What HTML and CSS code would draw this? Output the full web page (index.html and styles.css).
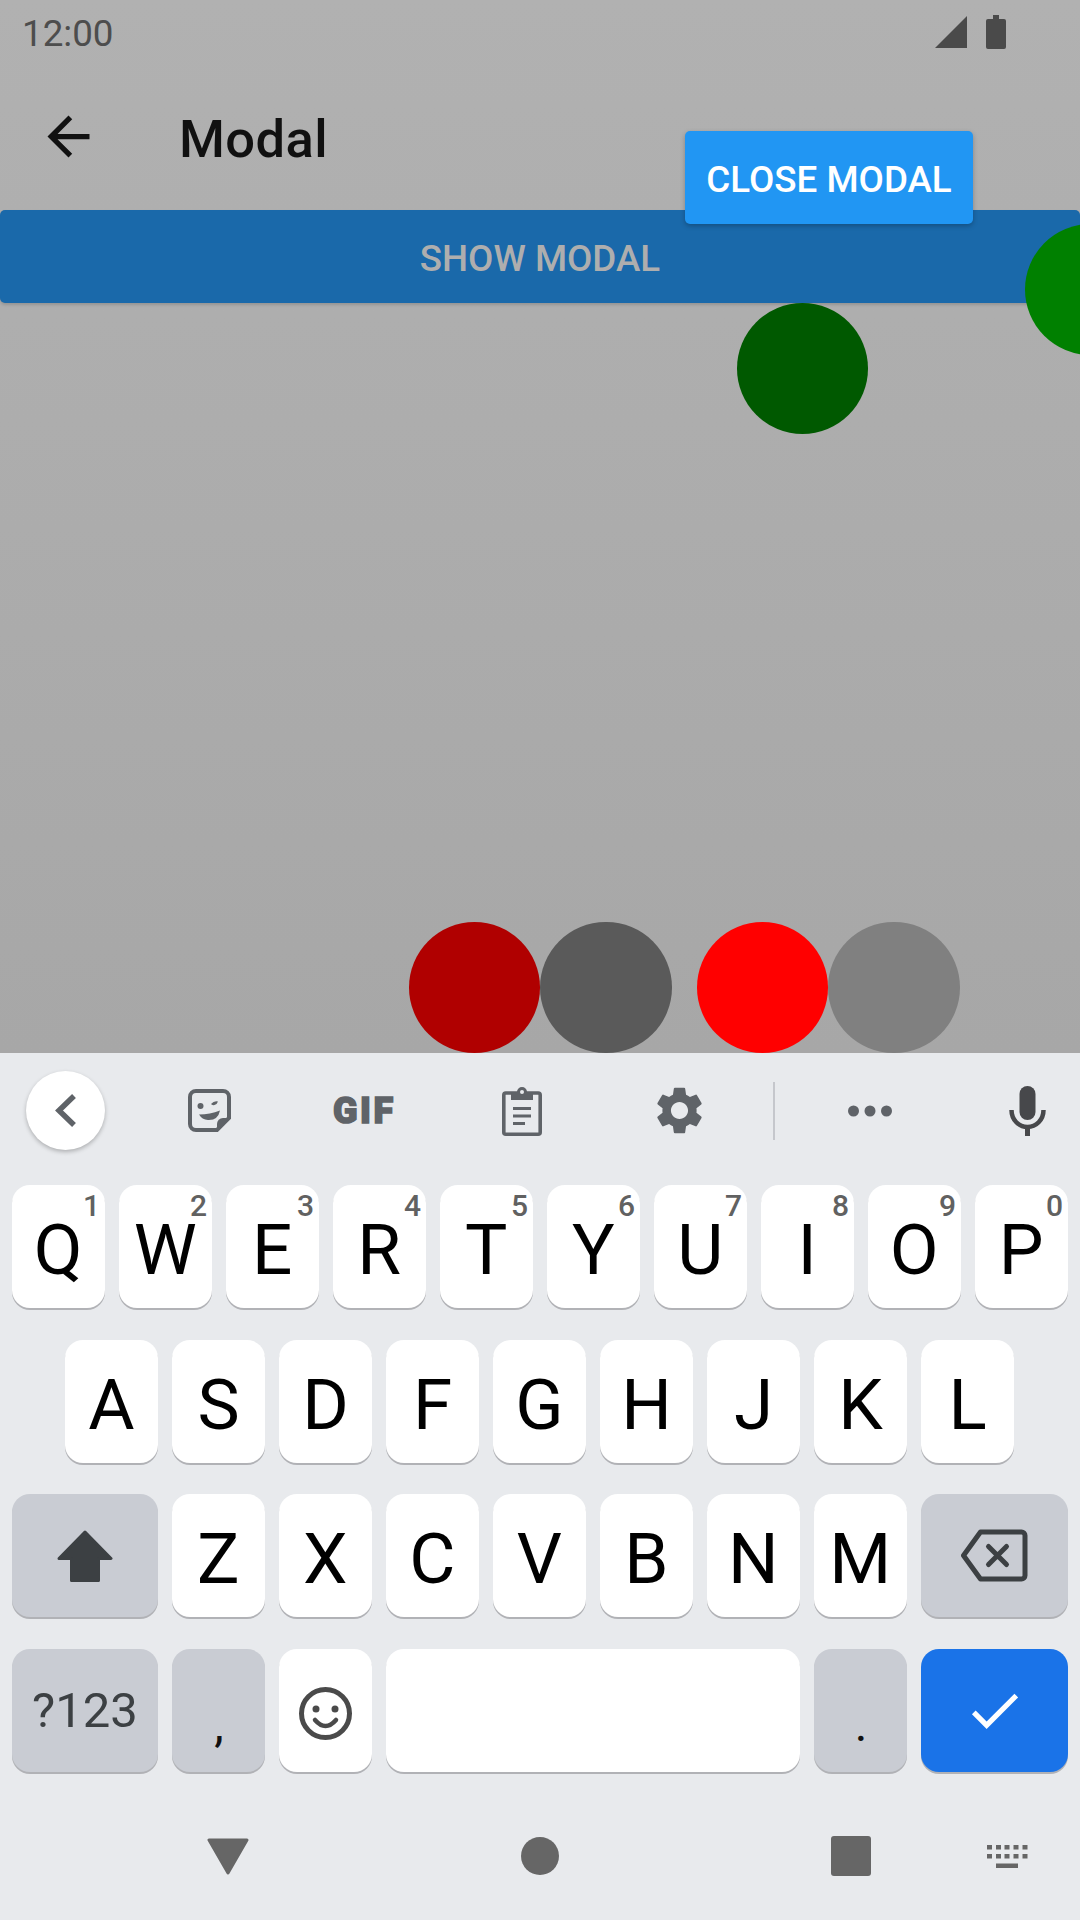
FILE: index.html
```html
<!DOCTYPE html>
<html lang="en">
<head>
    <meta charset="UTF-8">
    <title>Modal</title>
    <link rel="stylesheet" href="styles.css">
</head>
<body>
<div class="screen">
    <div class="main">
        <div class="status-bar">
            <span class="time">12:00</span>
            <div class="status-icons">
                <svg class="signal" width="32" height="32" viewBox="0 0 32 32"><path d="M0 32 32 0v32z"/></svg>
                <svg class="battery" width="20" height="34" viewBox="0 0 20 34"><path d="M7 0h6v4h5a2 2 0 0 1 2 2v26a2 2 0 0 1-2 2H2a2 2 0 0 1-2-2V6a2 2 0 0 1 2-2h5z"/></svg>
            </div>
        </div>
        <div class="app-bar">
            <svg class="back-arrow" width="63" height="63" viewBox="0 0 24 24"><path d="M20 11H7.83l5.59-5.59L12 4l-8 8 8 8 1.41-1.41L7.83 13H20v-2z"/></svg>
            <h1 class="title">Modal</h1>
        </div>
        <button class="btn show-btn">SHOW MODAL</button>
        <button class="btn close-btn">CLOSE MODAL</button>
        <div class="dot dot-green"></div>
        <div class="dot dot-green-dark"></div>
        <div class="dot-row">
            <div class="dot-item dot-red-dark"></div>
            <div class="dot-item dot-grey-dark"></div>
            <div class="dot-item dot-red"></div>
            <div class="dot-item dot-grey"></div>
        </div>
    </div>

    <div class="keyboard">
        <div class="toolbar">
            <div class="tool-back">
                <svg width="24" height="35" viewBox="0 0 24 35"><path d="M20 3 5 17.5 20 32" fill="none" stroke="#5f6368" stroke-width="5.5"/></svg>
            </div>
            <svg class="tool-sticker" width="43" height="43" viewBox="0 0 43 43">
                <path d="M8 2h27a6 6 0 0 1 6 6v21L29 41H8a6 6 0 0 1-6-6V8a6 6 0 0 1 6-6z" fill="none" stroke="#5f6368" stroke-width="4"/>
                <path d="M41 29 29 41v-6a6 6 0 0 1 6-6z" fill="#5f6368"/>
                <circle cx="12.500" cy="17" r="3" fill="#5f6368"/>
                <path d="M23 15q3-3.500 7-2.500-1 3-3.500 3.500t-3.500-1z" fill="#5f6368"/>
                <path d="M11 25.500q11 0 21-4-2 10-12 9.500-6-.5-9-5.500z" fill="#5f6368"/>
            </svg>
            <span class="tool-gif">GIF</span>
            <svg class="tool-clip" width="40" height="50" viewBox="0 0 40 50">
                <rect x="1.800" y="7" width="36.400" height="41.200" rx="2" fill="none" stroke="#5f6368" stroke-width="3.600"/>
                <path d="M9 6h6a5 5 0 0 1 10 0h6v8H9z" fill="#5f6368"/>
                <circle cx="20" cy="6" r="2" fill="#e8eaed"/>
                <path d="M11 21h18v3H11zM11 28.500h18v3H11zM11 36h12v3H11z" fill="#5f6368"/>
            </svg>
            <svg class="tool-gear" width="57" height="57" viewBox="0 0 24 24"><path d="M19.140 12.940c.04-.3.06-.61.06-.94 0-.32-.02-.64-.07-.94l2.030-1.580a.49.49 0 0 0 .12-.61l-1.920-3.320a.488.488 0 0 0-.59-.22l-2.390.96c-.5-.38-1.030-.7-1.620-.94l-.36-2.540a.484.484 0 0 0-.48-.41h-3.840c-.24 0-.43.17-.47.41l-.36 2.540c-.59.24-1.130.57-1.620.94l-2.390-.96c-.22-.08-.47 0-.59.22L2.740 8.870c-.12.21-.08.47.12.61l2.030 1.580c-.05.3-.09.63-.09.94s.02.64.07.94l-2.030 1.580a.49.49 0 0 0-.12.61l1.920 3.320c.12.22.37.29.59.22l2.390-.96c.5.38 1.030.7 1.620.94l.36 2.540c.05.24.24.41.48.41h3.840c.24 0 .44-.17.47-.41l.36-2.540c.59-.24 1.130-.56 1.620-.94l2.390.96c.22.08.47 0 .59-.22l1.920-3.320c.12-.22.07-.47-.12-.61l-2.010-1.580zM12 15.600c-1.980 0-3.600-1.620-3.600-3.600s1.620-3.600 3.600-3.600 3.600 1.620 3.600 3.600-1.620 3.600-3.600 3.600z"/></svg>
            <div class="tool-divider"></div>
            <svg class="tool-dots" width="44" height="12" viewBox="0 0 44 12">
                <circle cx="5.500" cy="6" r="5.500"/><circle cx="22" cy="6" r="5.500"/><circle cx="38.500" cy="6" r="5.500"/>
            </svg>
            <svg class="tool-mic" width="37" height="50" viewBox="0 0 37 50">
                <rect x="10.500" y="0" width="16" height="34" rx="8" fill="#47484b"/>
                <path d="M2.500 24c0 10 7.500 17 16 17s16-7 16-17" fill="none" stroke="#47484b" stroke-width="4.500"/>
                <rect x="16" y="40" width="5" height="10" fill="#47484b"/>
            </svg>
        </div>

        <div class="keys">
            <div class="key-row">
                <div class="key">Q<span class="hint">1</span></div>
                <div class="key">W<span class="hint">2</span></div>
                <div class="key">E<span class="hint">3</span></div>
                <div class="key">R<span class="hint">4</span></div>
                <div class="key">T<span class="hint">5</span></div>
                <div class="key">Y<span class="hint">6</span></div>
                <div class="key">U<span class="hint">7</span></div>
                <div class="key">I<span class="hint">8</span></div>
                <div class="key">O<span class="hint">9</span></div>
                <div class="key">P<span class="hint">0</span></div>
            </div>
            <div class="key-row key-row-center">
                <div class="key">A</div>
                <div class="key">S</div>
                <div class="key">D</div>
                <div class="key">F</div>
                <div class="key">G</div>
                <div class="key">H</div>
                <div class="key">J</div>
                <div class="key">K</div>
                <div class="key">L</div>
            </div>
            <div class="key-row">
                <div class="key key-shift key-grey">
                    <svg width="56" height="52" viewBox="0 0 56 52"><path d="M28 2 54 28.500H41.500V50.500H14.500V28.500H2z" fill="#3c4043" stroke="#3c4043" stroke-width="3" stroke-linejoin="round"/></svg>
                </div>
                <div class="key">Z</div>
                <div class="key">X</div>
                <div class="key">C</div>
                <div class="key">V</div>
                <div class="key">B</div>
                <div class="key">N</div>
                <div class="key">M</div>
                <div class="key key-last key-grey">
                    <svg width="67" height="53" viewBox="0 0 67 53">
                        <path d="M19.500 3h41a3.500 3.500 0 0 1 3.500 3.500v40a3.500 3.500 0 0 1-3.500 3.500h-41L2.500 26.500z" fill="none" stroke="#3c4043" stroke-width="5" stroke-linejoin="round"/>
                        <path d="M27.500 17.500l18 18M45.500 17.500l-18 18" fill="none" stroke="#3c4043" stroke-width="5" stroke-linecap="round"/>
                    </svg>
                </div>
            </div>
            <div class="key-row">
                <div class="key key-shift key-grey key-symbols">?123</div>
                <div class="key key-grey key-punct">,</div>
                <div class="key">
                    <svg width="53" height="53" viewBox="0 0 53 53">
                        <circle cx="26.500" cy="26.500" r="24" fill="none" stroke="#4a4a4a" stroke-width="5"/>
                        <circle cx="17" cy="22" r="3.500" fill="#4a4a4a"/>
                        <circle cx="36" cy="22" r="3.500" fill="#4a4a4a"/>
                        <path d="M16 33q10.500 12 21 0" fill="none" stroke="#4a4a4a" stroke-width="4.500" stroke-linecap="round"/>
                    </svg>
                </div>
                <div class="key key-space"></div>
                <div class="key key-grey key-punct">.</div>
                <div class="key key-last key-enter">
                    <svg width="63" height="63" viewBox="0 0 24 24"><path d="M9 16.170 4.830 12l-1.420 1.410L9 19 21 7l-1.410-1.410z" fill="#fff"/></svg>
                </div>
            </div>
        </div>

        <div class="nav-bar">
            <svg class="nav-back" width="42" height="37" viewBox="0 0 42 37"><path d="M2 2h38L21 35z" stroke="#666" stroke-width="3" stroke-linejoin="round"/></svg>
            <div class="nav-home"></div>
            <div class="nav-recent"></div>
            <svg class="nav-kb" width="41" height="23" viewBox="0 0 41 23">
                <path d="M0 0h5v4.500H0zM9 0h5v4.500H9zM17.500 0h5v4.500h-5zM26.500 0h5v4.500h-5zM35.500 0h5v4.500h-5zM0 9h5v4.500H0zM9 9h5v4.500H9zM17.500 9h5v4.500h-5zM26.500 9h5v4.500h-5zM35.500 9h5v4.500h-5zM9 18.500h22V23H9z"/>
            </svg>
        </div>
    </div>
</div>
</body>
</html>
```

FILE: styles.css
```css
* {
    box-sizing: border-box;
}
body {
    margin: 0;
    font-family: Roboto, "Liberation Sans", sans-serif;
}
.screen {
    width: 1080px;
    height: 1920px;
    display: flex;
    flex-direction: column;
    overflow: hidden;
}

/* dimmed app behind the modal */
.main {
    position: relative;
    height: 1053px;
    background: linear-gradient(#b1b1b1, #a7a7a7);
    overflow: hidden;
}
.status-bar {
    height: 63px;
    padding: 0 74px 0 22px;
    display: flex;
    align-items: center;
    justify-content: space-between;
}
.time {
    padding-top: 4px;
    font-size: 36.75px;
    color: #4d4d4d;
}
.status-icons {
    display: flex;
    align-items: center;
    gap: 19.500px;
}
.status-icons svg {
    display: block;
    fill: #4a4a4a;
}
.app-bar {
    height: 147px;
    padding-left: 37px;
    display: flex;
    align-items: center;
    gap: 79px;
}
.back-arrow {
    fill: #111;
}
.title {
    margin: 0;
    padding-top: 4px;
    font-size: 52.5px;
    font-weight: 500;
    letter-spacing: 0.4px;
    color: #111;
}
.btn {
    display: block;
    height: 93px;
    border: 0;
    border-radius: 5px;
    font-family: inherit;
    font-size: 36.75px;
    font-weight: 500;
    padding: 3px 0 0;
}
.show-btn {
    width: 100%;
    background: #1a69aa;
    color: #aeaeae;
    box-shadow: 0 2px 3px rgba(0, 0, 0, 0.15);
}
.close-btn {
    position: absolute;
    left: 685px;
    top: 131px;
    width: 288px;
    background: #2196f3;
    color: #fff;
    box-shadow: 0 2px 5px rgba(0, 0, 0, 0.25);
}
.dot {
    position: absolute;
    width: 131.25px;
    height: 131.25px;
    border-radius: 50%;
}
.dot-green {
    left: 1025px;
    top: 224px;
    background: #008000;
}
.dot-green-dark {
    left: 736.5px;
    top: 303px;
    background: #005900;
}
.dot-row {
    position: absolute;
    left: 409px;
    top: 922px;
    display: flex;
}
.dot-item {
    width: 131.25px;
    height: 131.25px;
    border-radius: 50%;
}
.dot-red-dark {
    background: #b00000;
}
.dot-grey-dark {
    background: #5a5a5a;
}
.dot-red {
    margin-left: 25.5px;
    background: #f00;
}
.dot-grey {
    background: #808080;
}

/* keyboard */
.keyboard {
    flex: 1;
    display: flex;
    flex-direction: column;
    background: #e8eaed;
}
.toolbar {
    height: 115px;
    padding-left: 26px;
    display: flex;
    align-items: center;
    fill: #5f6368;
}
.toolbar svg {
    flex: none;
    display: block;
}
.tool-back {
    width: 79px;
    height: 79px;
    border-radius: 50%;
    background: #fff;
    box-shadow: 0 2px 4px rgba(0, 0, 0, 0.25);
    display: flex;
    align-items: center;
    justify-content: center;
}
.tool-sticker {
    margin-left: 83px;
}
.tool-gif {
    margin-left: 102px;
    width: 62px;
    font-size: 36px;
    font-weight: 900;
    letter-spacing: 2.5px;
    color: #5f6368;
    -webkit-text-stroke: 1.5px #5f6368;
}
.tool-clip {
    margin-left: 107px;
}
.tool-gear {
    margin-left: 108.5px;
}
.tool-divider {
    margin-left: 65px;
    width: 2.5px;
    height: 58px;
    background: #c5c7cc;
}
.tool-dots {
    margin-left: 72.5px;
}
.tool-mic {
    margin-left: 117px;
}
.keys {
    padding: 17px 12px 0;
    display: flex;
    flex-direction: column;
    gap: 31.5px;
}
.key-row {
    display: flex;
    gap: 14px;
}
.key-row-center {
    padding-right: 0.5px;
    justify-content: center;
}
.key {
    position: relative;
    flex: none;
    width: 93px;
    height: 123px;
    padding: 6px 0.5px 0 0;
    border-radius: 18px;
    background: #fff;
    box-shadow: 0 2px 0 #b1b2b6;
    font-size: 71px;
    color: #000;
    display: flex;
    align-items: center;
    justify-content: center;
}
.hint {
    position: absolute;
    top: 3px;
    right: 5px;
    font-size: 30px;
    font-weight: 500;
    color: #616161;
}
.key-shift {
    width: 146px;
    padding: 0;
}
.key-last {
    width: 147px;
    padding: 0;
}
.key-grey {
    background: #c9ccd3;
}
.key-symbols {
    font-size: 49px;
    color: #3c4043;
}
.key-punct {
    align-items: flex-end;
    padding: 0 0 19px 1px;
    font-size: 48px;
    line-height: 56px;
    color: #111;
}
.key-space {
    flex: 1;
}
.key-enter {
    background: #1a73e8;
}
.nav-bar {
    flex: 1;
    margin-top: 20.5px;
    padding-left: 207px;
    display: flex;
    align-items: center;
}
.nav-back {
    fill: #666;
}
.nav-home {
    margin-left: 272px;
    width: 38px;
    height: 38px;
    border-radius: 50%;
    background: #666;
}
.nav-recent {
    margin-left: 272px;
    width: 40px;
    height: 40px;
    border-radius: 3px;
    background: #666;
}
.nav-kb {
    margin-left: 116px;
    fill: #666;
}
```
